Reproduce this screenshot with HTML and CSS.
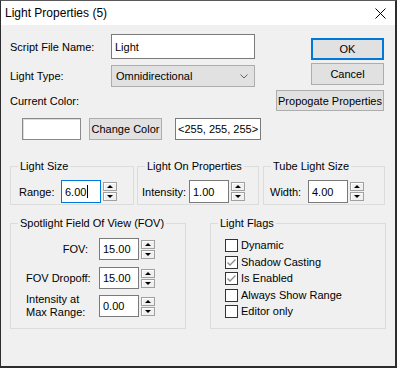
FILE: index.html
```html
<!DOCTYPE html>
<html>
<head>
<meta charset="utf-8">
<link rel="stylesheet" href="styles.css">
</head>
<body>
<div class="window">
  <div class="titlebar">
    <span class="title">Light Properties (5)</span>
    <svg class="close" width="11" height="11" viewBox="0 0 11 11"><path d="M0.5 0.5 L10.5 10.5 M10.5 0.5 L0.5 10.5" stroke="#000" stroke-width="1" fill="none"/></svg>
  </div>
  <div class="top">
    <div class="form">
      <div class="row row-name"><span class="lbl-top">Script File Name:</span><div class="edit name">Light</div></div>
      <div class="row row-type"><span class="lbl-top">Light Type:</span><div class="combo"><span>Omnidirectional</span><svg width="8" height="5" viewBox="0 0 8 5"><path d="M0.5 0.5 L4 4 L7.5 0.5" stroke="#606060" fill="none"/></svg></div></div>
      <div class="row row-cur">Current Color:</div>
      <div class="row row-color"><div class="swatch"></div><div class="btn change">Change Color</div><div class="edit rgb">&lt;255, 255, 255&gt;</div></div>
    </div>
    <div class="buttons">
      <div class="btn ok">OK</div>
      <div class="btn cancel">Cancel</div>
      <div class="btn prop">Propogate Properties</div>
    </div>
  </div>

  <div class="groups1">
    <fieldset class="grp g-size">
      <legend>Light Size</legend>
      <div class="spinrow"><span class="lbl">Range:</span><div class="edit num focus">6.00<span class="caret"></span></div><div class="spin"><span class="sb up"></span><span class="sb down"></span></div></div>
    </fieldset>
    <fieldset class="grp g-on">
      <legend>Light On Properties</legend>
      <div class="spinrow"><span class="lbl">Intensity:</span><div class="edit num">1.00</div><div class="spin"><span class="sb up"></span><span class="sb down"></span></div></div>
    </fieldset>
    <fieldset class="grp g-tube">
      <legend>Tube Light Size</legend>
      <div class="spinrow"><span class="lbl">Width:</span><div class="edit num">4.00</div><div class="spin"><span class="sb up"></span><span class="sb down"></span></div></div>
    </fieldset>
  </div>

  <div class="groups2">
    <fieldset class="grp g-spot">
      <legend>Spotlight Field Of View (FOV)</legend>
      <div class="spotrow r1"><span class="lbl">FOV:</span><div class="edit num">15.00</div><div class="spin"><span class="sb up"></span><span class="sb down"></span></div></div>
      <div class="spotrow r2"><span class="lbl">FOV Dropoff:</span><div class="edit num">15.00</div><div class="spin"><span class="sb up"></span><span class="sb down"></span></div></div>
      <div class="spotrow r3"><span class="lbl two">Intensity at<br>Max Range:</span><div class="edit num">0.00</div><div class="spin"><span class="sb up"></span><span class="sb down"></span></div></div>
    </fieldset>
    <fieldset class="grp g-flags">
      <legend>Light Flags</legend>
      <div class="checks">
        <div class="chk"><span class="box"></span><span>Dynamic</span></div>
        <div class="chk"><span class="box"><svg width="11" height="11" viewBox="0 0 11 11"><path d="M1.5 5.5 L4 8 L9.5 2.5" stroke="#8c8c8c" stroke-width="1.4" fill="none"/></svg></span><span>Shadow Casting</span></div>
        <div class="chk"><span class="box"><svg width="11" height="11" viewBox="0 0 11 11"><path d="M1.5 5.5 L4 8 L9.5 2.5" stroke="#8c8c8c" stroke-width="1.4" fill="none"/></svg></span><span>Is Enabled</span></div>
        <div class="chk"><span class="box"></span><span>Always Show Range</span></div>
        <div class="chk"><span class="box"></span><span>Editor only</span></div>
      </div>
    </fieldset>
  </div>
</div>
</body>
</html>
```

FILE: styles.css
```css
* { box-sizing: border-box; }

body {
  margin: 0;
  background: #f0f0f0;
  font-family: "Liberation Sans", Arial, sans-serif;
  font-size: 11px;
  color: #000;
}

.window {
  width: 397px;
  height: 368px;
  background: #f0f0f0;
  border-top: 1px solid #5a5a5a;
  border-left: 1px solid #2d2d2d;
  border-right: 2px solid #2d2d2d;
  border-bottom: 2px solid #2d2d2d;
  overflow: hidden;
}

.titlebar {
  height: 24px;
  background: #fff;
  display: flex;
  align-items: center;
  justify-content: space-between;
  padding: 0 9px 0 4px;
}
.title { font-size: 12px; }
.close { display: block; }

.top {
  display: flex;
  justify-content: space-between;
  padding: 0 11px 0 9px;
}

.row { display: flex; align-items: center; }
.lbl-top { width: 101px; }
.row-name { margin-top: 9px; height: 25px; }
.row-type { margin-top: 6px; height: 22px; }
.row-cur { margin-top: 7px; height: 14px; }
.row-color { margin-top: 10px; height: 22px; padding-left: 12px; }

.edit {
  background: #fff;
  border: 1px solid #7a7a7a;
  display: flex;
  align-items: center;
  padding-left: 3px;
}
.edit.name { width: 144px; height: 25px; }

.combo {
  width: 144px;
  height: 22px;
  background: #e1e1e1;
  border: 1px solid #adadad;
  display: flex;
  align-items: center;
  justify-content: space-between;
  padding: 0 6px 0 4px;
}
.combo svg { display: block; }

.swatch {
  width: 59px;
  height: 22px;
  background: #fff;
  border: 1px solid #8a8a8a;
  box-shadow: inset 1px 1px 0 #dcdcdc;
}

.btn {
  background: #e1e1e1;
  border: 1px solid #adadad;
  display: flex;
  align-items: center;
  justify-content: center;
}
.btn.change { width: 73px; height: 22px; margin-left: 8px; }
.edit.rgb { width: 86px; height: 22px; margin-left: 13px; padding-left: 2px; }

.buttons {
  display: flex;
  flex-direction: column;
  align-items: flex-end;
}
.btn.ok {
  width: 73px; height: 22px; margin-top: 13px;
  border-color: #0078d7;
  box-shadow: inset 0 0 0 1px #0078d7;
}
.btn.cancel { width: 73px; height: 22px; margin-top: 3px; }
.btn.prop { width: 108px; height: 21px; margin-top: 5px; }

fieldset.grp {
  margin: 0;
  padding: 0;
  border: 1px solid #dcdcdc;
  min-width: 0;
}
fieldset.grp legend {
  margin-left: 7px;
  padding: 0 2px;
  line-height: 13px;
}

.groups1 {
  display: flex;
  margin-top: 20px;
  padding-left: 9px;
}
.groups1 .grp { height: 45px; }
.g-size { width: 124px; }
.g-on { width: 122px; margin-left: 3px !important; }
.g-tube { width: 122px; margin-left: 4px !important; }

.spinrow {
  display: flex;
  align-items: center;
  height: 23px;
  margin-top: 7px;
}
.g-size .spinrow { padding-left: 8px; }
.g-size .lbl { width: 42px; }
.g-on .spinrow { padding-left: 4px; }
.g-on .lbl { width: 47px; }
.g-tube .spinrow { padding-left: 6px; }
.g-tube .lbl { width: 38px; }

.edit.num { width: 40px; height: 23px; }
.edit.focus { border-color: #0078d7; }
.caret {
  display: inline-block;
  width: 1px;
  height: 13px;
  background: #000;
  margin-left: 1px;
}

.spin {
  width: 14px;
  height: 19px;
  margin-left: 2px;
  display: flex;
  flex-direction: column;
  justify-content: space-between;
}
.sb {
  display: flex;
  align-items: center;
  justify-content: center;
  height: 9px;
  background: #f0f0f0;
  border: 1px solid #a0a0a0;
  box-shadow: inset 1px 1px 0 #fff;
}
.sb::after {
  content: "";
  width: 0;
  height: 0;
  border-left: 3px solid transparent;
  border-right: 3px solid transparent;
}
.sb.up::after { border-bottom: 3px solid #000; }
.sb.down::after { border-top: 3px solid #000; }

.groups2 {
  display: flex;
  margin-top: 12px;
  padding-left: 9px;
}
.groups2 .grp { height: 112px; width: 176px; }
.g-flags { margin-left: 24px !important; }

.spotrow {
  display: flex;
  align-items: center;
  height: 22px;
  padding-left: 15px;
}
.spotrow .lbl {
  flex: none;
  width: 73px;
  padding-right: 11px;
  text-align: right;
  white-space: nowrap;
}
.spotrow .lbl.two {
  text-align: left;
  line-height: 13px;
}
.spotrow .edit.num { height: 22px; }
.spotrow.r1 { margin-top: 8px; }
.spotrow.r2 { margin-top: 7px; }
.spotrow.r3 { margin-top: 6px; }

.checks {
  display: grid;
  grid-template-rows: 17px 16px 17px 16px 16px;
  margin-top: 9px;
  padding-left: 14px;
}
.chk {
  display: flex;
  align-items: flex-start;
  line-height: 13px;
}
.box {
  width: 13px;
  height: 13px;
  background: #fff;
  border: 1px solid #333;
  margin-right: 3px;
  display: flex;
  align-items: center;
  justify-content: center;
}
.box svg { display: block; }
```
